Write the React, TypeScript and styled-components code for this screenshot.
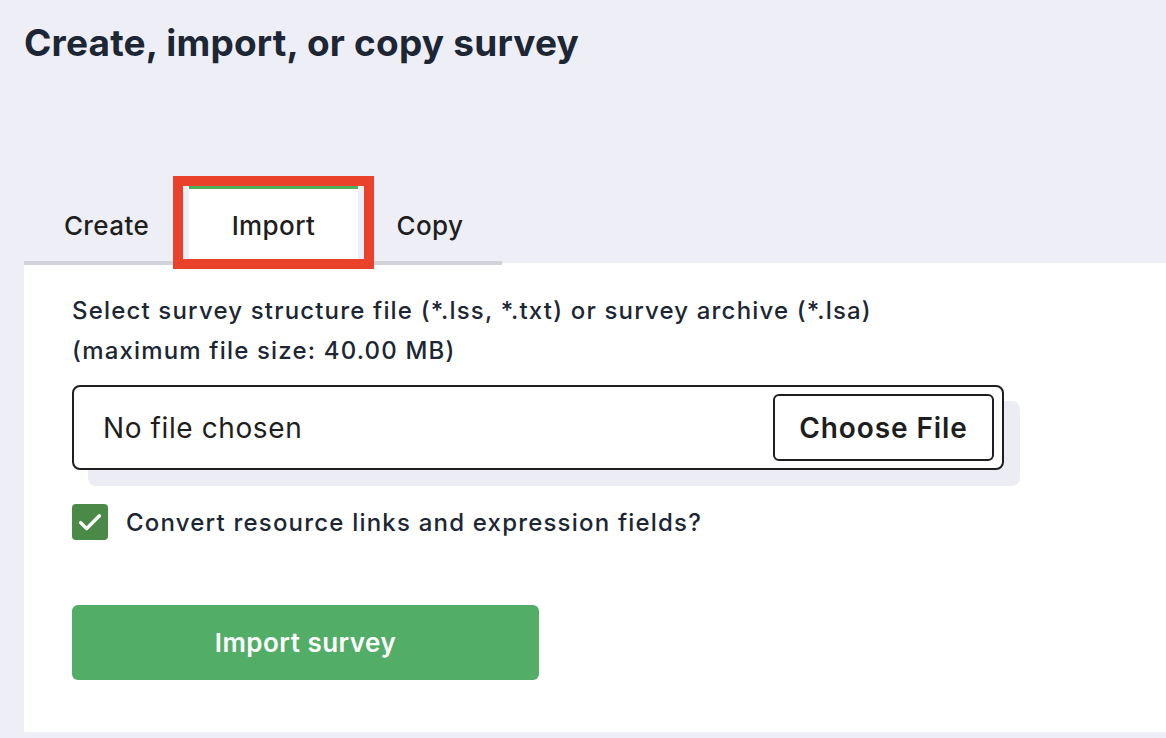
import { FC, useState } from "react";
import styled, { createGlobalStyle } from "styled-components";

const GlobalStyle = createGlobalStyle`
  html, body {
    margin: 0;
    padding: 0;
    background: #eeeef6;
  }

  body {
    font-family: Inter, Roboto, "Noto Sans", sans-serif;
    color: #1c2634;
  }
`;

const tabs = [
  { name: "Create", width: 165 },
  { name: "Import", width: 169 },
  { name: "Copy", width: 144 },
];

export const App: FC = () => {
  const [active, setActive] = useState("Import");
  const [convert, setConvert] = useState(true);

  return (
    <>
      <GlobalStyle />
      <Page>
        <Title>Create, import, or copy survey</Title>

        <TabList>
          {tabs.map(({ name, width }) => (
            <Tab
              key={name}
              width={width}
              active={name === active}
              onClick={() => setActive(name)}
            >
              {name}
              {name === active && <Highlight />}
            </Tab>
          ))}
        </TabList>

        <Panel>
          <Label>
            Select survey structure file (*.lss, *.txt) or survey archive (*.lsa)
            <br />
            (maximum file size: 40.00 MB)
          </Label>

          <FileField>
            <FileText>No file chosen</FileText>
            <ChooseButton type="button">Choose File</ChooseButton>
          </FileField>

          <CheckRow onClick={() => setConvert(!convert)}>
            <CheckBox checked={convert}>
              {convert && (
                <svg width="30" height="30" viewBox="0 0 24 24" fill="none">
                  <path
                    d="M4.5 12.5l4.8 4.8L19.5 7"
                    stroke="#fff"
                    strokeWidth="2.8"
                    strokeLinecap="round"
                    strokeLinejoin="round"
                  />
                </svg>
              )}
            </CheckBox>
            <CheckLabel>Convert resource links and expression fields?</CheckLabel>
          </CheckRow>

          <SubmitButton type="button">Import survey</SubmitButton>
        </Panel>
      </Page>
    </>
  );
};

export default App;

const Page = styled.div`
  padding: 19px 0 0 24px;
  min-height: 738px;
  box-sizing: border-box;
`;

const Title = styled.h1`
  margin: 0;

  font-size: 37px;
  line-height: 48px;
  font-weight: 700;
  letter-spacing: 0.2px;
  color: #1c2634;
`;

const TabList = styled.div`
  display: inline-flex;
  margin-top: 119px;
  position: relative;
  z-index: 1;

  border-bottom: 4px solid #d2d3d8;
`;

const Tab = styled.div<{ active: boolean; width: number }>`
  position: relative;
  width: ${({ width }) => width}px;
  height: 72px;
  display: flex;
  align-items: center;
  justify-content: center;

  font-size: 26px;
  font-weight: 500;
  letter-spacing: 0.4px;
  color: #1e1e1e;
  cursor: pointer;

  background: ${({ active }) => (active ? "#fff" : "transparent")};
  border-top: 3px solid ${({ active }) => (active ? "#4caf5c" : "transparent")};
`;

const Highlight = styled.span`
  position: absolute;
  top: -13px;
  left: -16px;
  right: -16px;
  bottom: -8px;

  border: 10px solid #e9412a;
  pointer-events: none;
`;

const Panel = styled.div`
  margin-top: -2px;
  padding: 28px 48px 52px;
  background: #fff;
`;

const Label = styled.div`
  font-size: 24px;
  line-height: 40px;
  font-weight: 500;
  letter-spacing: 1.17px;
  color: #1c2634;
`;

const FileField = styled.div`
  margin-top: 14px;
  width: 932px;
  height: 85px;
  box-sizing: border-box;
  display: flex;
  align-items: center;
  justify-content: space-between;
  padding: 0 8px 0 29px;

  background: #fff;
  border: 2px solid #1e1e1e;
  border-radius: 8px;
  box-shadow: 16px 16px 0 #ececf5;
`;

const FileText = styled.span`
  font-size: 28px;
  letter-spacing: 0.6px;
  color: #1e1e1e;
`;

const ChooseButton = styled.button`
  height: 67px;
  width: 221px;

  font-family: inherit;
  font-size: 28px;
  font-weight: 600;
  letter-spacing: 0.9px;
  color: #1e1e1e;

  background: #fff;
  border: 2px solid #1e1e1e;
  border-radius: 6px;
`;

const CheckRow = styled.label`
  display: flex;
  align-items: center;
  column-gap: 18px;
  margin-top: 34px;
  cursor: pointer;
`;

const CheckBox = styled.span<{ checked: boolean }>`
  width: 36px;
  height: 36px;
  display: flex;
  align-items: center;
  justify-content: center;

  background: ${({ checked }) => (checked ? "#4a8a46" : "#fff")};
  border: ${({ checked }) => (checked ? "none" : "2px solid #1e1e1e")};
  border-radius: 4px;
`;

const CheckLabel = styled.span`
  font-size: 24px;
  font-weight: 500;
  letter-spacing: 1.2px;
  color: #1c2634;
`;

const SubmitButton = styled.button`
  display: block;
  margin-top: 65px;
  width: 467px;
  height: 75px;

  font-family: inherit;
  font-size: 26px;
  font-weight: 600;
  letter-spacing: 0.5px;
  color: #fff;

  background: #52ad67;
  border: none;
  border-radius: 6px;
`;
